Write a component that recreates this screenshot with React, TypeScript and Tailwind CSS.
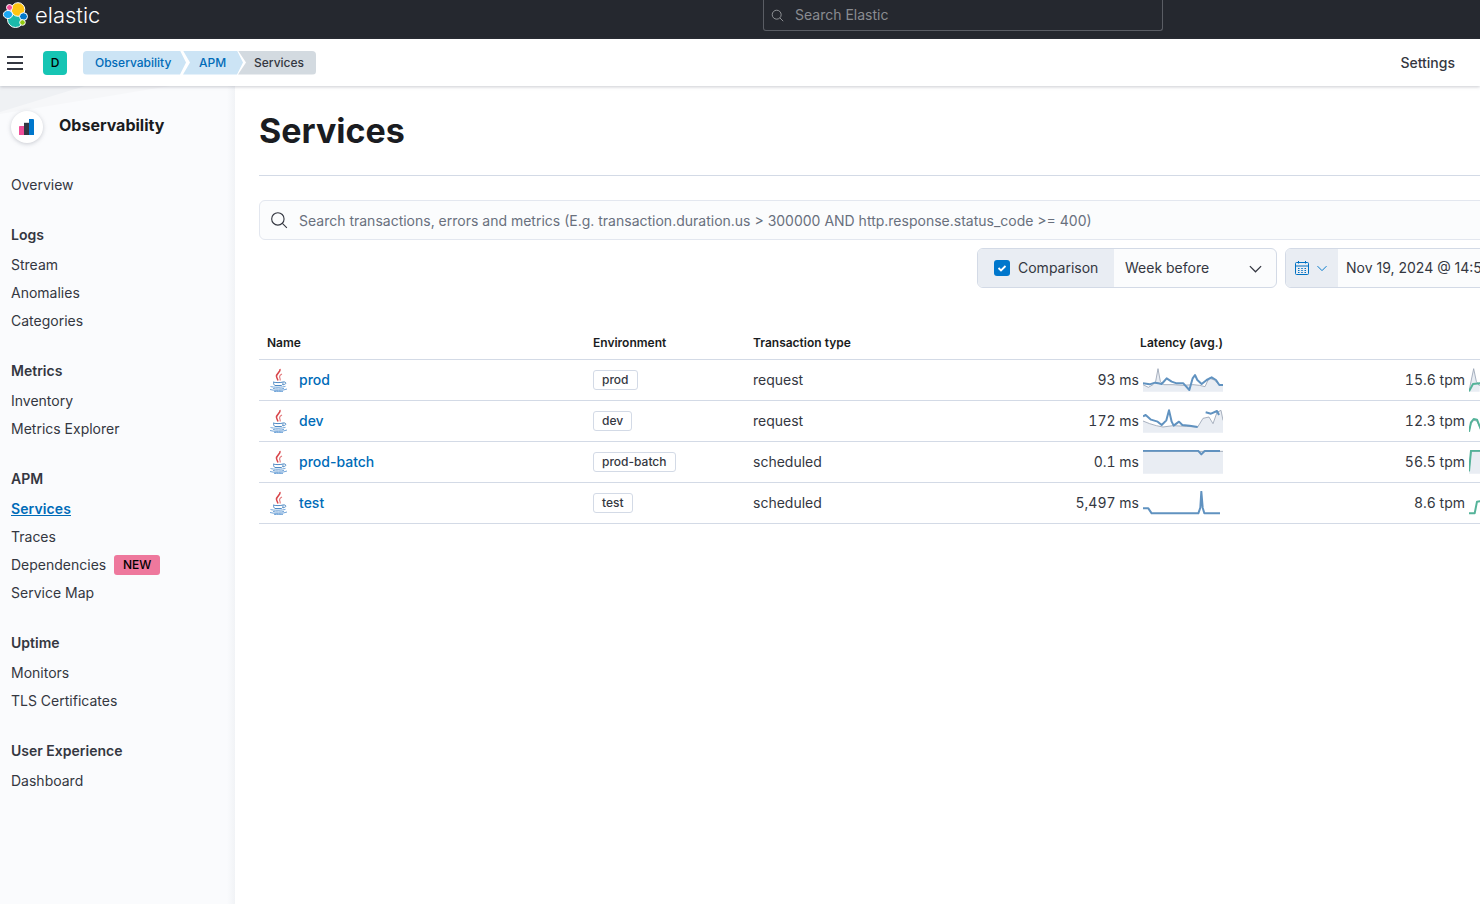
import React from "react";

const INTER = "font-['Inter','Liberation_Sans',sans-serif]";

const navGroups = [
  { title: "Logs", items: ["Stream", "Anomalies", "Categories"] },
  { title: "Metrics", items: ["Inventory", "Metrics Explorer"] },
  { title: "APM", items: ["Services", "Traces", "Dependencies", "Service Map"] },
  { title: "Uptime", items: ["Monitors", "TLS Certificates"] },
  { title: "User Experience", items: ["Dashboard"] },
];

type Row = {
  name: string;
  env: string;
  type: string;
  latency: string;
  tpm: string;
  blue: string;
  grey?: string;
  area?: string;
  green: string;
  greenGrey?: string;
  greenArea?: string;
};

const rows: Row[] = [
  {
    name: "prod",
    env: "prod",
    type: "request",
    latency: "93 ms",
    tpm: "15.6 tpm",
    blue: "M0 46 L20 49 L36 44 L46 46 L56 48 L71 31 L86 41 L101 46 L121 46 L139 66 L149 31 L156 21 L163 36 L176 48 L191 36 L206 28 L219 36 L229 51 L240 51",
    grey: "M0 50 L16 58 L30 50 L38 40 L45 2 L52 40 L62 50 L90 50 L120 52 L150 50 L170 52 L186 56 L198 30 L214 36 L228 50 L240 52",
    area: "M0 50 L16 58 L30 50 L38 40 L45 2 L52 40 L62 50 L90 50 L120 52 L150 50 L170 52 L186 56 L198 30 L214 36 L228 50 L240 52 L240 71 L0 71 Z",
    green: "M0 70 L12 48 L32 46 L50 50",
    greenGrey: "M0 70 L6 40 L14 2 L22 40 L32 54",
    greenArea: "M0 70 L6 40 L14 2 L22 40 L32 54 L32 71 L0 71 Z",
  },
  {
    name: "dev",
    env: "dev",
    type: "request",
    latency: "172 ms",
    tpm: "12.3 tpm",
    blue: "M0 22 L8 18 L24 32 L44 38 L56 48 L70 34 L78 4 L86 38 L92 50 L108 38 L118 48 L140 50 L164 54 M188 10 L204 14 L222 6 L228 18",
    grey: "M0 36 L20 44 L40 50 L60 54 L90 50 L130 52 L164 54 L180 28 L198 24 L210 44 L222 10 L234 4 L240 34",
    area: "M0 36 L20 44 L40 50 L60 54 L90 50 L130 52 L164 54 L180 28 L198 24 L210 44 L222 10 L234 4 L240 34 L240 71 L0 71 Z",
    green: "M0 68 L6 40 L14 30 L24 32 L36 62",
    greenGrey: "M0 68 L6 44 L14 34 L24 36 L36 64",
  },
  {
    name: "prod-batch",
    env: "prod-batch",
    type: "scheduled",
    latency: "0.1 ms",
    tpm: "56.5 tpm",
    blue: "M0 2 L165 2 L175 13 L185 3 L231 3",
    grey: "M0 4 L240 4",
    area: "M0 4 L240 4 L240 71 L0 71 Z",
    green: "M0 64 L6 2 L40 2",
    greenGrey: "M0 64 L6 4 L40 4",
    greenArea: "M0 64 L6 4 L40 4 L40 71 L0 71 Z",
  },
  {
    name: "test",
    env: "test",
    type: "scheduled",
    latency: "5,497 ms",
    tpm: "8.6 tpm",
    blue: "M0 52 L16 52 L26 67 L166 67 L172 50 L175 2 L179 50 L184 67 L231 67",
    green: "M0 67 L17 67 L24 32 L40 30",
  },
];

function ElasticLogo() {
  return (
    <svg width="26" height="26" viewBox="0 0 26 26" className="shrink-0">
      <circle cx="13.500" cy="17.500" r="8" fill="#1bb9ab" stroke="#fff" strokeWidth="1" />
      <circle cx="16" cy="7.500" r="6.800" fill="#fec514" stroke="#fff" strokeWidth="1" />
      <ellipse cx="6" cy="12.500" rx="4.600" ry="4" fill="#1ba9f5" stroke="#fff" strokeWidth="1" />
      <circle cx="7.500" cy="5.500" r="3" fill="#f04e98" stroke="#fff" strokeWidth="1" />
      <ellipse cx="21.500" cy="14.500" rx="4" ry="3.800" fill="#0077cc" stroke="#fff" strokeWidth="1" />
      <circle cx="20.500" cy="20.500" r="2.800" fill="#93c90e" stroke="#fff" strokeWidth="1" />
    </svg>
  );
}

function SearchIcon({ className }: { className: string }) {
  return (
    <svg viewBox="0 0 16 16" fill="none" stroke="currentColor" strokeWidth="1" className={className}>
      <circle cx="7" cy="7" r="5.500" />
      <path d="M11 11l4 4" />
    </svg>
  );
}

function JavaIcon() {
  return (
    <svg width="20" height="24" viewBox="0 0 20 24" fill="none" className="shrink-0">
      <path d="M11 1c1 3-4 4.500-3.500 7.500.2 1.300 1 2.500 1.500 4" stroke="#d8454a" strokeWidth="1.500" />
      <path d="M13 6c-2 1-3 2.500-2 4.500.3.700.3 1.300 0 2" stroke="#e27a7d" strokeWidth="1.100" />
      <path d="M4 14c2 .8 8 .8 10 0M4.500 14.500c0 1.500.5 2.500 1.500 3h6.500c1-.5 1.500-1.500 1.500-3M14 14c2-.5 3.500.8 2.500 1.800-.6.500-1.500.8-2.500 1" stroke="#4f8ac4" strokeWidth="1" />
      <path d="M1.500 18.500c3 1 12 1 15-.2M4 20.500c3 .7 8 .7 11 0M1 21.500c4 1.300 13 1.300 17-.5M5 23.300c3 .5 7 .5 9 0" stroke="#6fa3d8" strokeWidth="1" />
    </svg>
  );
}

function CalendarIcon() {
  return (
    <svg width="16" height="16" viewBox="0 0 16 16" fill="none" stroke="#0071c2" strokeWidth="1">
      <rect x="1.500" y="2.500" width="13" height="12" rx="1" />
      <path d="M1.500 6h13M4.500 1v2.500M11.500 1v2.500" />
      <path d="M4 8.500h1.500M7.250 8.500h1.500M10.500 8.500H12M4 10.500h1.500M7.250 10.500h1.500M10.500 10.500H12M4 12.500h1.500M7.250 12.500h1.500M10.500 12.500H12" />
    </svg>
  );
}

function Chevron({ className, size }: { className: string; size: number }) {
  return (
    <svg width={size} height={size} viewBox="0 0 16 16" fill="none" stroke="currentColor" strokeWidth="1.300" className={className}>
      <path d="M2 5.500l6 6 6-6" />
    </svg>
  );
}

function Spark({ line, grey, area, color, fill }: { line: string; grey?: string; area?: string; color: string; fill: string }) {
  return (
    <svg width="80" height="24" viewBox="0 0 240 72" fill="none" className="shrink-0">
      {area && <path d={area} fill={fill} />}
      {grey && <path d={grey} stroke="#98a2b3" strokeWidth="2.500" />}
      <path d={line} stroke={color} strokeWidth="6" strokeLinejoin="round" />
    </svg>
  );
}

function Sidebar() {
  return (
    <aside className="relative w-[235px] shrink-0 bg-[#fafbfd]">
      {/* background wedge and inner edge shade */}
      <div className="absolute left-0 top-0 h-[28px] w-[170px] bg-[#f6f7f9] [clip-path:polygon(0_0,100%_0,0_100%)]" />
      <div className="absolute left-0 top-0 h-[26px] w-[85px] bg-[#eff1f4] [clip-path:polygon(0_0,100%_0,0_100%)]" />
      <div className="absolute inset-y-0 right-0 w-2 bg-linear-to-r from-transparent to-[#f1f3f6]" />
      <div className="relative flex items-center gap-4 pl-[11px] pt-[25px]">
        <div className="flex h-8 w-8 items-center justify-center rounded-full bg-white shadow-[0_1px_4px_rgba(105,112,125,0.35)]">
          <svg width="16" height="16" viewBox="0 0 16 16">
            <path d="M0 7.500a1 1 0 0 1 1-.5h4v9H0z" fill="#f04e98" />
            <path d="M5 3.800h5V16H5z" fill="#343741" />
            <path d="M10 0h4a1 1 0 0 1 1 1v15h-5z" fill="#0077cc" />
          </svg>
        </div>
        <div className="mb-1 text-base font-bold text-[#1a1c21]">Observability</div>
      </div>
      <div className="relative mt-[28px] flex h-7 items-center pl-[11px] text-sm text-[#343741]">Overview</div>
      <nav className="relative mt-[22px] flex flex-col gap-[22px] pl-[11px] text-sm text-[#343741]">
        {navGroups.map((group) => (
          <div key={group.title}>
            <div className="mb-[2px] flex h-7 items-center font-semibold text-[#343741]">{group.title}</div>
            {group.items.map((item) => (
              <div key={item} className="flex h-7 items-center">
                {item === "Services" ? (
                  <span className="font-semibold tracking-[0.1px] text-[#006bb8] underline">{item}</span>
                ) : (
                  <span>{item}</span>
                )}
                {item === "Dependencies" && (
                  <span className="ml-2 flex h-5 w-[46px] items-center justify-center rounded-[3px] bg-[#ee789d] text-xs font-medium text-black">
                    NEW
                  </span>
                )}
              </div>
            ))}
          </div>
        ))}
      </nav>
    </aside>
  );
}

function ServicesTable() {
  return (
    <div className="mt-[40px] w-[1298px] text-sm text-[#343741]">
      <div className="flex h-[32px] items-center border-b border-[#d3dae6] pb-[2px] text-xs font-semibold text-[#1a1c21]">
        <div className="w-[326px] pl-2">Name</div>
        <div className="w-[160px] pl-2">Environment</div>
        <div className="w-[255px] pl-2">Transaction type</div>
        <div className="w-[231px] pr-2 text-right">Latency (avg.)</div>
      </div>
      {rows.map((row) => (
        <div key={row.name} className="flex h-[41px] items-center border-b border-[#d3dae6]">
          <div className="flex w-[326px] items-center gap-[10px] pl-[10px]">
            <JavaIcon />
            <span className="font-medium text-[#006bb8]">{row.name}</span>
          </div>
          <div className="flex w-[160px] pl-2">
            <span className="flex h-5 items-center rounded-[3px] border border-[#d3dae6] px-2 text-xs font-medium">
              {row.env}
            </span>
          </div>
          <div className="w-[255px] pl-2">{row.type}</div>
          <div className="flex w-[231px] items-center justify-end gap-1 pr-2">
            <span className="tabular-nums">{row.latency}</span>
            <Spark line={row.blue} grey={row.grey} area={row.area} color="#6092c0" fill="#e9edf3" />
          </div>
          <div className="flex w-[326px] items-center justify-end gap-1 pr-2">
            <span className="tabular-nums">{row.tpm}</span>
            <Spark line={row.green} grey={row.greenGrey} area={row.greenArea} color="#54b399" fill="#e9edf3" />
          </div>
        </div>
      ))}
    </div>
  );
}

export default function App() {
  return (
    <div className={`flex h-[904px] w-[1480px] flex-col overflow-hidden bg-white ${INTER}`}>
      <header className="flex h-[39px] shrink-0 items-start bg-[#25282f]">
        <div className="flex h-[30px] w-[763px] items-center gap-[7px] pl-[2px]">
          <ElasticLogo />
          <span className="text-[22px] font-light leading-none text-white">elastic</span>
        </div>
        <div className="flex h-[31px] w-[400px] items-center gap-[11px] rounded-b-[3px] border border-t-0 border-[#5a5d64] pl-[7px] text-sm text-[#8a8c91]">
          <SearchIcon className="h-[13px] w-[13px] text-[#a5a7ab]" />
          <span>Search Elastic</span>
        </div>
      </header>

      <div className="z-10 flex h-[47px] shrink-0 items-center bg-white pl-[7px] shadow-[0_1px_3px_rgba(105,112,125,0.35)]">
        <div className="flex flex-col gap-[4px]">
          <span className="h-[2px] w-4 bg-[#343741]" />
          <span className="h-[2px] w-4 bg-[#343741]" />
          <span className="h-[2px] w-4 bg-[#343741]" />
        </div>
        <div className="ml-5 flex h-6 w-6 items-center justify-center rounded-[4px] bg-[#16c5b4] text-xs font-medium text-black">D</div>
        <div className="ml-4 flex h-6 items-center text-xs font-medium">
          <span className="flex h-full w-[103px] items-center rounded-l-[4px] bg-[#cce4f5] pl-3 text-[#006bb8] [clip-path:polygon(0_0,97px_0,103px_50%,97px_100%,0_100%)]">Observability</span>
          <span className="-ml-[3px] flex h-full w-[60px] items-center bg-[#cce4f5] pl-4 text-[#006bb8] [clip-path:polygon(0_0,54px_0,60px_50%,54px_100%,0_100%,7px_50%)]">APM</span>
          <span className="-ml-[5px] flex h-full w-[78px] items-center rounded-r-[4px] bg-[#d3dae0] pl-4 text-[#343741] [clip-path:polygon(0_0,100%_0,100%_100%,0_100%,8px_50%)]">Services</span>
        </div>
        <div className="ml-auto mr-[25px] text-sm font-medium text-[#343741]">Settings</div>
      </div>

      <div className="flex min-h-0 flex-1">
        <Sidebar />
        <main className="min-w-0 flex-1 overflow-hidden pl-6">
          <h1 className="mt-[22px] text-[34px] font-bold leading-[46px] text-[#1a1c21]">Services</h1>
          <div className="mt-[21px] h-px w-[1298px] bg-[#d3dae6]" />
          <div className="mt-6 flex h-10 w-[1298px] items-center gap-[11px] rounded-[6px] border border-[#e3e7ef] bg-[#fbfcfd] pl-[10px] text-sm text-[#69707d]">
            <SearchIcon className="h-[18px] w-[18px] text-[#343741]" />
            <span className="pt-[2px]">Search transactions, errors and metrics (E.g. transaction.duration.us &gt; 300000 AND http.response.status_code &gt;= 400)</span>
          </div>
          <div className="mt-2 flex w-[1298px] text-sm text-[#343741]">
            <div className="ml-[718px] flex h-10 w-[300px] overflow-hidden rounded-[6px] border border-[#d3dae6] bg-[#fbfcfd]">
              <div className="flex w-[136px] items-center gap-2 bg-[#e9edf3] pl-4">
                <span className="flex h-4 w-4 items-center justify-center rounded-[3px] bg-[#0077cc]">
                  <svg width="10" height="10" viewBox="0 0 10 10" fill="none" stroke="#fff" strokeWidth="1.800">
                    <path d="M1.500 5l2.500 2.500 4.500-4.500" />
                  </svg>
                </span>
                <span>Comparison</span>
              </div>
              <div className="flex flex-1 items-center justify-between pl-[11px] pr-[13px]">
                <span>Week before</span>
                <Chevron className="text-[#343741]" size={15} />
              </div>
            </div>
            <div className="ml-2 flex h-10 flex-1 overflow-hidden rounded-l-[6px] border border-[#d3dae6] bg-[#fbfcfd]">
              <div className="flex w-[52px] items-center gap-[6px] bg-[#e9edf3] pl-2">
                <CalendarIcon />
                <Chevron className="text-[#0077cc]" size={12} />
              </div>
              <div className="flex flex-1 items-center pl-2 whitespace-nowrap">Nov 19, 2024 @ 14:58:00.000</div>
            </div>
          </div>
          <ServicesTable />
        </main>
      </div>
    </div>
  );
}
